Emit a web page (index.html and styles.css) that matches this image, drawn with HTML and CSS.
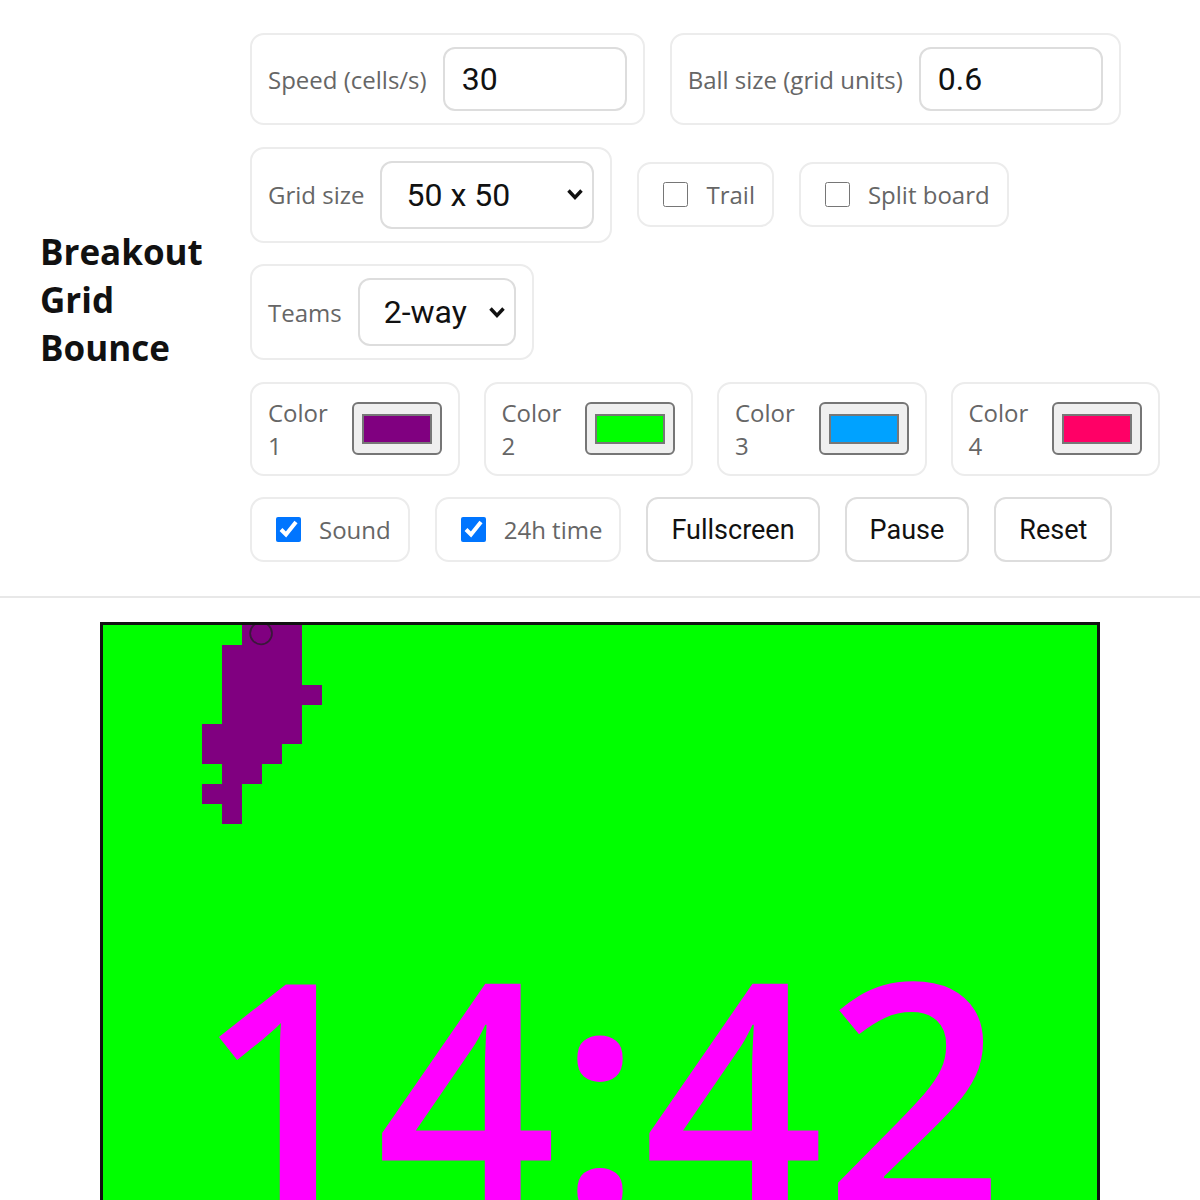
FILE: index.html
```html
<!DOCTYPE html>
<html lang="en">
<head>
<meta charset="utf-8">
<title>Breakout Grid Bounce</title>
<link rel="stylesheet" href="styles.css">
</head>
<body>
<header class="top">
  <h1 class="title">Breakout Grid Bounce</h1>
  <div class="controls">
    <div class="row">
      <label class="group"><span class="lbl">Speed (cells/s)</span><input class="num" type="text" value="30"></label>
      <label class="group"><span class="lbl">Ball size (grid units)</span><input class="num" type="text" value="0.6"></label>
    </div>
    <div class="row">
      <label class="group"><span class="lbl">Grid size</span>
        <span class="select wide"><select><option>50 x 50</option></select><svg class="chev" viewBox="0 0 18 13" width="18" height="13"><polyline points="2.5,2.5 9,9.5 15.5,2.5" fill="none" stroke="#111" stroke-width="3.4"/></svg></span>
      </label>
      <label class="check"><input type="checkbox"><span>Trail</span></label>
      <label class="check"><input type="checkbox"><span>Split board</span></label>
    </div>
    <div class="row">
      <label class="group"><span class="lbl">Teams</span>
        <span class="select narrow"><select><option>2-way</option></select><svg class="chev" viewBox="0 0 18 13" width="18" height="13"><polyline points="2.5,2.5 9,9.5 15.5,2.5" fill="none" stroke="#111" stroke-width="3.4"/></svg></span>
      </label>
    </div>
    <div class="colors">
      <label class="group cgroup"><span class="lbl">Color 1</span><input class="swatch" type="color" value="#800080"></label>
      <label class="group cgroup"><span class="lbl">Color 2</span><input class="swatch" type="color" value="#00ff00"></label>
      <label class="group cgroup"><span class="lbl">Color 3</span><input class="swatch" type="color" value="#00a2ff"></label>
      <label class="group cgroup"><span class="lbl">Color 4</span><input class="swatch" type="color" value="#ff0066"></label>
    </div>
    <div class="row">
      <label class="check"><input type="checkbox" checked><span>Sound</span></label>
      <label class="check"><input type="checkbox" checked><span>24h time</span></label>
      <button class="btn" type="button">Fullscreen</button>
      <button class="btn" type="button">Pause</button>
      <button class="btn" type="button">Reset</button>
    </div>
  </div>
</header>
<main class="stage">
  <div class="board">
    <svg class="cells" viewBox="0 0 50 50" preserveAspectRatio="none" shape-rendering="crispEdges">
      <g fill="#800080">
        <rect x="7" y="0" width="3" height="1"/>
        <rect x="6" y="1" width="4" height="4"/>
        <rect x="10" y="3" width="1" height="1"/>
        <rect x="5" y="5" width="5" height="1"/>
        <rect x="5" y="6" width="4" height="1"/>
        <rect x="6" y="7" width="2" height="1"/>
        <rect x="5" y="8" width="2" height="1"/>
        <rect x="6" y="9" width="1" height="1"/>
      </g>
      <circle cx="7.95" cy="0.42" r="0.55" fill="#800080" stroke="#3a183a" stroke-width="0.09" shape-rendering="geometricPrecision"/>
    </svg>
    <div class="clock">14:42</div>
  </div>
</main>
</body>
</html>
```
FILE: styles.css
```css
* { box-sizing: border-box; }

body {
  margin: 0;
  background: #fff;
  font-family: "Open Sans", "Liberation Sans", sans-serif;
  color: #111;
}

.top {
  display: flex;
  align-items: center;
  gap: 40px;
  padding: 33px 40px 34px 40px;
  border-bottom: 2px solid #e8e8e8;
}

.title {
  flex: none;
  width: 170px;
  margin: 0;
  padding-top: 4px;
  font-size: 35px;
  font-weight: 700;
  line-height: 48px;
  color: #111;
}

.controls {
  flex: 1;
  display: flex;
  flex-direction: column;
  gap: 21.5px;
}

.row {
  display: flex;
  align-items: center;
  gap: 25px;
}

.colors {
  display: grid;
  grid-template-columns: repeat(4, 1fr);
  gap: 24px;
}

.group {
  display: flex;
  align-items: center;
  gap: 16px;
  padding: 12px 16px;
  border: 2px solid #ececec;
  border-radius: 14px;
  background: #fff;
}

.lbl {
  font-size: 24px;
  color: #666;
}

.num {
  width: 184px;
  height: 64px;
  padding: 0 17px;
  border: 2px solid #ddd;
  border-radius: 12px;
  font-family: Roboto, "Liberation Sans", sans-serif;
  font-size: 32px;
  color: #111;
  background: #fff;
  outline: none;
}

.select {
  display: flex;
  align-items: center;
  height: 68px;
  padding: 0 8px 0 24px;
  border: 2px solid #ddd;
  border-radius: 12px;
  background: #fff;
}
.select.wide { width: 214px; }
.select.narrow { width: 158px; }

.select select {
  flex: 1;
  min-width: 0;
  appearance: none;
  -webkit-appearance: none;
  border: 0;
  padding: 0;
  margin: 0;
  background: transparent;
  font-family: Roboto, "Liberation Sans", sans-serif;
  font-size: 32px;
  color: #111;
  outline: none;
}

.chev { flex: none; display: block; }

.check {
  display: flex;
  align-items: center;
  gap: 18px;
  padding: 14px 17px 14px 24px;
  border: 2px solid #ececec;
  border-radius: 14px;
  font-size: 24px;
  color: #666;
}

.check input {
  width: 25px;
  height: 25px;
  margin: 0;
}

.cgroup .lbl { flex: 1; min-width: 0; }

.swatch {
  flex: none;
  width: 90px;
  height: 53px;
  padding: 10px 8px 9px;
  border: 2px solid #767676;
  border-radius: 6px;
  background: #efefef;
  -webkit-appearance: none;
  appearance: none;
}
.swatch::-webkit-color-swatch-wrapper { padding: 0; }
.swatch::-webkit-color-swatch { border: 2px solid #777; border-radius: 0; }

.btn {
  height: 65px;
  padding: 0 23px;
  border: 2px solid #ddd;
  border-radius: 12px;
  background: #fff;
  font-family: Roboto, "Liberation Sans", sans-serif;
  font-size: 27px;
  color: #111;
}

.stage {
  display: flex;
  justify-content: center;
  padding: 24px 0;
}

.board {
  position: relative;
  width: 1000px;
  height: 1000px;
  border: 3px solid #111;
  background: #00ff00;
  overflow: hidden;
}

.cells {
  display: block;
  width: 100%;
  height: 100%;
}

.clock {
  position: absolute;
  left: 0;
  right: 0;
  top: 305px;
  font-family: "Open Sans", sans-serif;
  font-size: 316px;
  font-weight: 600;
  line-height: 316px;
  text-align: center;
  color: #ff00ff;
}
```
